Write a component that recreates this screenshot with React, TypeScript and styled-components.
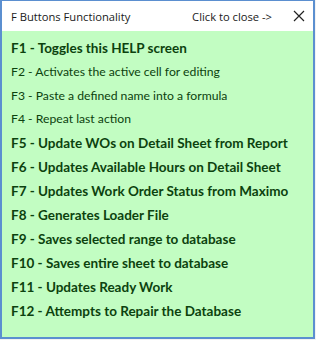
import { FC } from "react";
import styled, { createGlobalStyle } from "styled-components";

const GlobalStyle = createGlobalStyle`
  html, body {
    margin: 0;
    padding: 0;
    background: #f2f2f2;
  }
`;

type Item = { label: string; bold: boolean };

const items: Item[] = [
  { label: "F1 - Toggles this HELP screen", bold: true },
  { label: "F2 - Activates the active cell for editing", bold: false },
  { label: "F3 - Paste a defined name into a formula", bold: false },
  { label: "F4 - Repeat last action", bold: false },
  { label: "F5 - Update WOs on Detail Sheet from Report", bold: true },
  { label: "F6 - Updates Available Hours on Detail Sheet", bold: true },
  { label: "F7 - Updates Work Order Status from Maximo", bold: true },
  { label: "F8 - Generates Loader File", bold: true },
  { label: "F9 - Saves selected range to database", bold: true },
  { label: "F10 - Saves entire sheet to database", bold: true },
  { label: "F11 - Updates Ready Work", bold: true },
  { label: "F12 - Attempts to Repair the Database", bold: true },
];

const App: FC = () => {
  return (
    <>
      <GlobalStyle />
      <Window>
        <TitleBar>
          <Title>F Buttons Functionality</Title>
          <CloseHint>Click to close -&gt;</CloseHint>
          <CloseButton aria-label="close">
            <svg width="12" height="12" viewBox="0 0 12 12">
              <path d="M1 1 L11 11 M11 1 L1 11" stroke="#222" strokeWidth="1.2" fill="none" />
            </svg>
          </CloseButton>
        </TitleBar>
        <Content>
          {items.map((item) => (
            <Line key={item.label} $bold={item.bold}>
              {item.label}
            </Line>
          ))}
        </Content>
      </Window>
    </>
  );
};

export default App;

const Window = styled.div`
  width: 311px;
  height: 336px;
  border: 2px solid #5b8fd0;
  border-top: 1px solid #5b8fd0;
  display: flex;
  flex-direction: column;
  background: #c2fdc2;
`;

const TitleBar = styled.div`
  height: 30px;
  background: #ffffff;
  display: flex;
  align-items: center;
  padding-left: 9px;
  font-family: "Open Sans", "Noto Sans", sans-serif;
  font-size: 11.2px;
  color: #1a1a1a;
`;

const Title = styled.span`
  flex: 1;
`;

const CloseHint = styled.span`
  margin-right: 14px;
`;

const CloseButton = styled.div`
  width: 26px;
  height: 30px;
  display: flex;
  align-items: center;
  justify-content: center;
  margin-right: 1px;
`;

const Content = styled.div`
  flex: 1;
  display: flex;
  flex-direction: column;
  padding: 5px 0 0 9px;
  font-family: Lato, "Liberation Sans", sans-serif;
  color: #0c420e;
`;

const Line = styled.div<{ $bold: boolean }>`
  height: ${(p) => (p.$bold ? 24 : 23.5)}px;
  display: flex;
  align-items: center;
  font-size: ${(p) => (p.$bold ? 13.5 : 12.2)}px;
  font-weight: ${(p) => (p.$bold ? 700 : 400)};
  white-space: nowrap;
`;
